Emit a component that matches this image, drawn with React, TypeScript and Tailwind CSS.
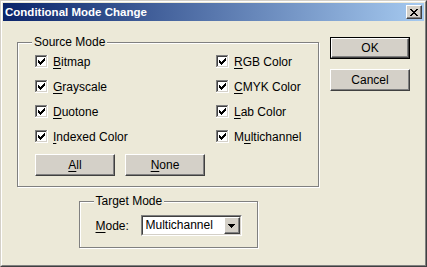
import React from 'react';

const checkRows: [number, number, number][] = [
  // y, x start, length
  [3, 9, 1],
  [4, 8, 2],
  [5, 3, 1],
  [5, 7, 3],
  [6, 3, 2],
  [6, 6, 3],
  [7, 3, 5],
  [8, 4, 3],
  [9, 5, 1],
];

const CheckBox: React.FC = () => (
  <svg width="13" height="13" viewBox="0 0 13 13" shapeRendering="crispEdges" className="shrink-0">
    <rect x="0" y="0" width="13" height="13" fill="#ffffff" />
    <rect x="0" y="0" width="12" height="1" fill="#808080" />
    <rect x="0" y="0" width="1" height="12" fill="#808080" />
    <rect x="1" y="1" width="10" height="1" fill="#404040" />
    <rect x="1" y="1" width="1" height="10" fill="#404040" />
    <rect x="1" y="11" width="11" height="1" fill="#d4d0c8" />
    <rect x="11" y="1" width="1" height="11" fill="#d4d0c8" />
    {checkRows.map(([y, x, w], i) => (
      <rect key={i} x={x} y={y} width={w} height="1" fill="#000000" />
    ))}
  </svg>
);

const Check: React.FC<{ pre?: string; u: string; post: string }> = ({ pre = '', u, post }) => (
  <div className="h-[25px] flex items-center">
    <CheckBox />
    <span className="ml-[5px] leading-[14px]">
      {pre}
      <span className="underline underline-offset-[2px]">{u}</span>
      {post}
    </span>
  </div>
);

const raised =
  'bg-[#d4d0c8] border border-t-white border-l-white border-r-[#404040] border-b-[#404040] shadow-[inset_-1px_-1px_0_#808080]';

const Button: React.FC<{ children: React.ReactNode; isDefault?: boolean }> = ({ children, isDefault }) =>
  isDefault ? (
    <div className="w-[80px] h-[22px] border border-black">
      <div className={`w-full h-full flex items-center justify-center leading-[14px] ${raised}`}>{children}</div>
    </div>
  ) : (
    <div className={`w-[80px] h-[22px] flex items-center justify-center leading-[14px] ${raised}`}>{children}</div>
  );

const xRows: [number, number, number][] = [
  [0, 0, 2],
  [0, 6, 2],
  [1, 1, 2],
  [1, 5, 2],
  [2, 2, 4],
  [3, 3, 2],
  [4, 2, 4],
  [5, 1, 2],
  [5, 5, 2],
  [6, 0, 2],
  [6, 6, 2],
];

export default function App() {
  return (
    <div className="w-[427px] h-[267px] font-['Liberation_Sans',Arial,sans-serif] text-[12px] text-black">
      <div className="w-full h-full bg-[#ece9d8] border border-t-[#d4d0c8] border-l-[#d4d0c8] border-r-[#404040] border-b-[#404040]">
        <div className="w-full h-full p-[1px] flex flex-col border border-t-white border-l-white border-r-[#808080] border-b-[#808080]">
          {/* title bar */}
          <div className="h-[18px] shrink-0 flex items-center justify-between pl-[2px] pr-[2px] bg-[linear-gradient(to_right,#0a246a,#a6caf0)]">
            <span className="text-white font-bold text-[11.5px] leading-[14px]">Conditional Mode Change</span>
            <div className={`w-[16px] h-[14px] flex items-center justify-center ${raised}`}>
              <svg width="8" height="7" viewBox="0 0 8 7" shapeRendering="crispEdges">
                {xRows.map(([y, x, w], i) => (
                  <rect key={i} x={x} y={y} width={w} height="1" fill="#000000" />
                ))}
              </svg>
            </div>
          </div>

          {/* body */}
          <div className="flex-1 flex items-start pl-[14px] pt-[15px] gap-[11px]">
            <div className="w-[302px] flex flex-col items-center">
              <fieldset className="w-[302px] border border-[#808080] shadow-[1px_1px_0_#fff,inset_1px_1px_0_#fff] pl-[14px] pb-[10px]">
                <legend className="px-[2px] leading-[13px] bg-[#ece9d8]">Source Mode</legend>
                <div className="ml-[3px]">
                  <div className="grid grid-cols-[181px_1fr]">
                    <Check u="B" post="itmap" />
                    <Check u="R" post="GB Color" />
                    <Check u="G" post="rayscale" />
                    <Check u="C" post="MYK Color" />
                    <Check u="D" post="uotone" />
                    <Check u="L" post="ab Color" />
                    <Check u="I" post="ndexed Color" />
                    <Check pre="M" u="u" post="ltichannel" />
                  </div>
                  <div className="flex gap-[10px] mt-[5px]">
                    <Button>
                      <span className="underline underline-offset-[2px]">A</span>ll
                    </Button>
                    <Button>
                      <span className="underline underline-offset-[2px]">N</span>one
                    </Button>
                  </div>
                </div>
              </fieldset>

              <fieldset className="w-[179px] mt-[8px] border border-[#808080] shadow-[1px_1px_0_#fff,inset_1px_1px_0_#fff] pl-[14px] pt-[7px] pb-[11px]">
                <legend className="px-[2px] leading-[13px] bg-[#ece9d8]">Target Mode</legend>
                <div className="ml-[2px] flex items-center">
                  <span className="w-[45px] leading-[14px]">
                    <span className="underline underline-offset-[2px]">M</span>ode:
                  </span>
                  <div className="w-[101px] h-[21px] flex items-stretch bg-white border border-t-[#808080] border-l-[#808080] border-r-white border-b-white">
                    <div className="flex-1 flex items-stretch border border-t-[#404040] border-l-[#404040] border-r-[#d4d0c8] border-b-[#d4d0c8]">
                      <span className="flex-1 pl-[3px] leading-[17px]">Multichannel</span>
                      <div className={`w-[16px] flex items-center justify-center ${raised}`}>
                        <svg width="7" height="4" viewBox="0 0 7 4" shapeRendering="crispEdges">
                          <rect x="0" y="0" width="7" height="1" fill="#000" />
                          <rect x="1" y="1" width="5" height="1" fill="#000" />
                          <rect x="2" y="2" width="3" height="1" fill="#000" />
                          <rect x="3" y="3" width="1" height="1" fill="#000" />
                        </svg>
                      </div>
                    </div>
                  </div>
                </div>
              </fieldset>
            </div>

            <div className="mt-[1px] flex flex-col gap-[10px]">
              <Button isDefault>OK</Button>
              <Button>Cancel</Button>
            </div>
          </div>
        </div>
      </div>
    </div>
  );
}
